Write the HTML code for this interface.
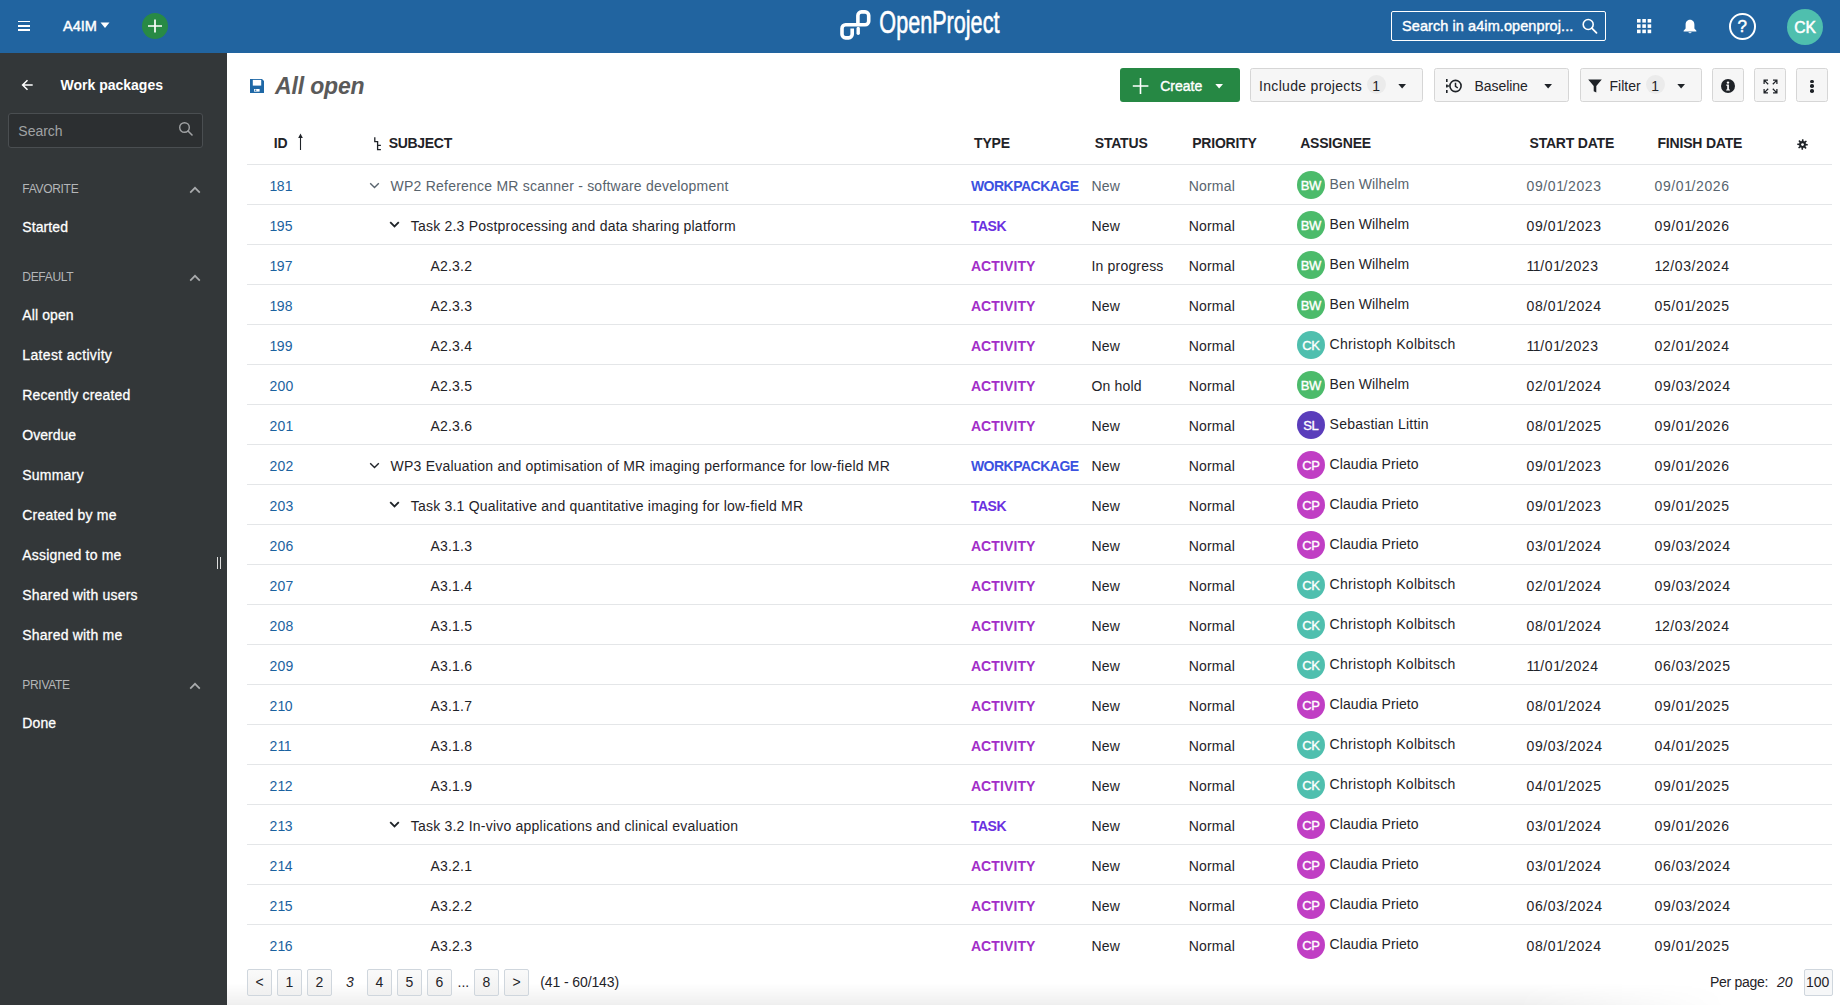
<!DOCTYPE html><html><head><meta charset="utf-8"><style>
*{margin:0;padding:0;box-sizing:border-box}
html,body{width:1840px;height:1005px;overflow:hidden;background:#fff;font-family:"Liberation Sans", sans-serif}
.t{position:absolute;white-space:nowrap;line-height:1}
.a{position:absolute}
</style></head><body><div class="a" style="left:0;top:0;width:1840px;height:53px;background:#2164a0"></div>
<div class="a" style="left:18px;top:20.8px;width:12px;height:1.6px;background:#fff"></div>
<div class="a" style="left:18px;top:25px;width:12px;height:1.6px;background:#fff"></div>
<div class="a" style="left:18px;top:29.2px;width:12px;height:1.6px;background:#fff"></div>
<div class="t" style="left:63px;top:18.73px;font-size:14.5px;font-weight:400;color:#fff;font-style:normal;letter-spacing:0px;-webkit-text-stroke:0.45px #fff;">A4IM</div>
<svg class="a" style="left:100px;top:22px" width="10" height="7"><path d="M0.5 0.5 L9.5 0.5 L5 6 Z" fill="#fff"/></svg>
<div class="a" style="left:142px;top:13px;width:26px;height:26px;border-radius:50%;background:#288a45"></div>
<svg class="a" style="left:147px;top:18px" width="16" height="16"><path d="M8 1.5V14.5M1 8H15" stroke="#fff" stroke-width="1.7"/></svg>
<svg class="a" style="left:835px;top:5px" width="40" height="40" viewBox="0 0 40 40">
<path d="M17.2 23.5 V29.3 A3.6 3.6 0 0 1 13.6 32.9 H10.6 A3.6 3.6 0 0 1 7 29.3 V23.4 A3.6 3.6 0 0 1 10.6 19.8 H30.1 A3.6 3.6 0 0 0 33.7 16.2 V10.5 A3.6 3.6 0 0 0 30.1 6.9 H26.5 A3.6 3.6 0 0 0 22.9 10.5 V19.8" fill="none" stroke="#fff" stroke-width="3.6"/>
<path d="M23.2 23.5 V28.3" stroke="#fff" stroke-width="3.4" stroke-linecap="round"/>
</svg>
<svg class="a" style="left:878px;top:4px" width="130" height="42"><text x="2" y="29.3" font-family="Liberation Sans" font-size="31.5" fill="#fff" stroke="#fff" stroke-width="0.6" transform="scale(0.686 1)" style="font-weight:400">OpenProject</text></svg>
<div class="a" style="left:1391px;top:11px;width:215px;height:30px;border:1.2px solid #fff;border-radius:2px"></div>
<div class="t" style="left:1402px;top:18.73px;font-size:14.5px;font-weight:400;color:#fff;font-style:normal;letter-spacing:0.08px;-webkit-text-stroke:0.4px #fff;">Search in a4im.openproj...</div>
<svg class="a" style="left:1581px;top:17px" width="18" height="18"><circle cx="7.2" cy="7.5" r="5" fill="none" stroke="#fff" stroke-width="1.6"/><path d="M10.8 11.2 L15.5 15.8" stroke="#fff" stroke-width="1.8" stroke-linecap="round"/></svg>
<svg class="a" style="left:1636.7px;top:18.5px" width="15" height="15"><rect x="0.0" y="0.0" width="3.6" height="3.6" fill="#fff"/><rect x="5.3" y="0.0" width="3.6" height="3.6" fill="#fff"/><rect x="10.6" y="0.0" width="3.6" height="3.6" fill="#fff"/><rect x="0.0" y="5.3" width="3.6" height="3.6" fill="#fff"/><rect x="5.3" y="5.3" width="3.6" height="3.6" fill="#fff"/><rect x="10.6" y="5.3" width="3.6" height="3.6" fill="#fff"/><rect x="0.0" y="10.6" width="3.6" height="3.6" fill="#fff"/><rect x="5.3" y="10.6" width="3.6" height="3.6" fill="#fff"/><rect x="10.6" y="10.6" width="3.6" height="3.6" fill="#fff"/></svg>
<svg class="a" style="left:1683px;top:19px" width="14" height="15" viewBox="0 0 14 15"><path d="M7 0.8 C4 0.8 2.6 3.2 2.6 5.8 V9.6 L0.6 11.8 V12.4 H13.4 V11.8 L11.4 9.6 V5.8 C11.4 3.2 10 0.8 7 0.8Z" fill="#fff"/><path d="M5.3 13.2 A1.8 1.6 0 0 0 8.7 13.2Z" fill="#fff"/></svg>
<div class="a" style="left:1729px;top:13px;width:26.5px;height:26.5px;border-radius:50%;border:2px solid #fff"></div>
<div class="t" style="left:1729px;top:18.21px;font-size:17px;font-weight:400;color:#fff;font-style:normal;letter-spacing:0px;-webkit-text-stroke:0.5px #fff;width:26.5px;text-align:center">?</div>
<div class="a" style="left:1787px;top:9px;width:36px;height:36px;border-radius:50%;background:#4fbfae"></div>
<div class="t" style="left:1787px;top:19.79px;font-size:15.6px;font-weight:400;color:#fff;font-style:normal;letter-spacing:-0.2px;-webkit-text-stroke:0.5px #fff;width:36px;text-align:center">CK</div>
<div class="a" style="left:0;top:53px;width:227px;height:952px;background:#333739"></div>
<svg class="a" style="left:21px;top:79px" width="14" height="12"><path d="M11.7 6 H2 M6.5 1.2 L1.6 6 L6.5 10.8" fill="none" stroke="#fff" stroke-width="1.5"/></svg>
<div class="t" style="left:60.5px;top:78.35px;font-size:14px;font-weight:700;color:#fff;font-style:normal;letter-spacing:0px;">Work packages</div>
<div class="a" style="left:7.5px;top:113px;width:195.5px;height:35px;border:1px solid #4a4e51;border-radius:3px;background:#2c2f31"></div>
<div class="t" style="left:18.3px;top:124.15px;font-size:14px;font-weight:400;color:#a0a2a4;font-style:normal;letter-spacing:0px;">Search</div>
<svg class="a" style="left:178px;top:121px" width="16" height="16"><circle cx="6.5" cy="6.5" r="4.8" fill="none" stroke="#a0a2a4" stroke-width="1.4"/><path d="M10 10 L14 14" stroke="#a0a2a4" stroke-width="1.6" stroke-linecap="round"/></svg>
<div class="t" style="left:22.3px;top:182.84px;font-size:12px;font-weight:400;color:#b4b6b8;font-style:normal;letter-spacing:-0.3px;">FAVORITE</div>
<svg class="a" style="left:188.6px;top:185.5px" width="12" height="8"><path d="M1.2 6.6 L6 1.8 L10.8 6.6" fill="none" stroke="#a9abad" stroke-width="1.7"/></svg>
<div class="t" style="left:22.3px;top:270.84px;font-size:12px;font-weight:400;color:#b4b6b8;font-style:normal;letter-spacing:-0.3px;">DEFAULT</div>
<svg class="a" style="left:188.6px;top:273.5px" width="12" height="8"><path d="M1.2 6.6 L6 1.8 L10.8 6.6" fill="none" stroke="#a9abad" stroke-width="1.7"/></svg>
<div class="t" style="left:22.3px;top:678.84px;font-size:12px;font-weight:400;color:#b4b6b8;font-style:normal;letter-spacing:-0.3px;">PRIVATE</div>
<svg class="a" style="left:188.6px;top:681.5px" width="12" height="8"><path d="M1.2 6.6 L6 1.8 L10.8 6.6" fill="none" stroke="#a9abad" stroke-width="1.7"/></svg>
<div class="t" style="left:22.3px;top:219.95px;font-size:14px;font-weight:400;color:#fff;font-style:normal;letter-spacing:0.1px;-webkit-text-stroke:0.28px #fff;">Started</div>
<div class="t" style="left:22.3px;top:307.95px;font-size:14px;font-weight:400;color:#fff;font-style:normal;letter-spacing:0.1px;-webkit-text-stroke:0.28px #fff;">All open</div>
<div class="t" style="left:22.3px;top:347.95px;font-size:14px;font-weight:400;color:#fff;font-style:normal;letter-spacing:0.34px;-webkit-text-stroke:0.28px #fff;">Latest activity</div>
<div class="t" style="left:22.3px;top:387.95px;font-size:14px;font-weight:400;color:#fff;font-style:normal;letter-spacing:0.2px;-webkit-text-stroke:0.28px #fff;">Recently created</div>
<div class="t" style="left:22.3px;top:427.95px;font-size:14px;font-weight:400;color:#fff;font-style:normal;letter-spacing:0.0px;-webkit-text-stroke:0.28px #fff;">Overdue</div>
<div class="t" style="left:22.3px;top:467.95px;font-size:14px;font-weight:400;color:#fff;font-style:normal;letter-spacing:0.2px;-webkit-text-stroke:0.28px #fff;">Summary</div>
<div class="t" style="left:22.3px;top:507.95px;font-size:14px;font-weight:400;color:#fff;font-style:normal;letter-spacing:0.2px;-webkit-text-stroke:0.28px #fff;">Created by me</div>
<div class="t" style="left:22.3px;top:547.95px;font-size:14px;font-weight:400;color:#fff;font-style:normal;letter-spacing:0.2px;-webkit-text-stroke:0.28px #fff;">Assigned to me</div>
<div class="t" style="left:22.3px;top:587.95px;font-size:14px;font-weight:400;color:#fff;font-style:normal;letter-spacing:0.2px;-webkit-text-stroke:0.28px #fff;">Shared with users</div>
<div class="t" style="left:22.3px;top:627.95px;font-size:14px;font-weight:400;color:#fff;font-style:normal;letter-spacing:0.2px;-webkit-text-stroke:0.28px #fff;">Shared with me</div>
<div class="t" style="left:22.3px;top:715.95px;font-size:14px;font-weight:400;color:#fff;font-style:normal;letter-spacing:0.1px;-webkit-text-stroke:0.28px #fff;">Done</div>
<div class="a" style="left:217px;top:557px;width:1.3px;height:12px;background:#ddd"></div><div class="a" style="left:220px;top:557px;width:1.3px;height:12px;background:#ddd"></div>
<svg class="a" style="left:250px;top:79px" width="14" height="14" viewBox="0 0 14 14"><path d="M0 0 H12 L14 2 V14 H0 Z" fill="#1f68a6"/><rect x="2.8" y="0.9" width="8.4" height="5.7" fill="#fff"/><rect x="4" y="10" width="5.6" height="2.6" fill="#fff"/><rect x="4.8" y="10.6" width="1.5" height="1.2" fill="#1f68a6"/></svg>
<div class="t" style="left:275px;top:75.33px;font-size:23px;font-weight:700;color:#5a5a5a;font-style:italic;letter-spacing:-0.15px;">All open</div>
<div class="a" style="left:1120px;top:68px;width:120px;height:34px;background:#268844;border-radius:3px"></div>
<svg class="a" style="left:1132px;top:78px" width="17" height="16"><path d="M8.5 0 V16 M0.8 8 H16.4" stroke="#fff" stroke-width="1.6"/></svg>
<div class="t" style="left:1160.2px;top:79.05px;font-size:14px;font-weight:400;color:#fff;font-style:normal;letter-spacing:0px;-webkit-text-stroke:0.4px #fff;">Create</div>
<svg class="a" style="left:1214.5px;top:84px" width="9" height="5"><path d="M0.3 0 H8 L4.15 4.4Z" fill="#fff"/></svg>
<div class="a" style="left:1250px;top:68px;width:172.5px;height:34px;background:#f6f6f6;border:1px solid #d6d6d6;border-radius:2.5px"></div>
<div class="t" style="left:1259px;top:78.65px;font-size:14px;font-weight:400;color:#1f2328;font-style:normal;letter-spacing:0.32px;">Include projects</div>
<div class="a" style="left:1366.5px;top:74.5px;width:19px;height:19px;border-radius:50%;background:#ebebeb"></div>
<div class="t" style="left:1372.3px;top:78.65px;font-size:14px;font-weight:400;color:#1f2328;font-style:normal;letter-spacing:0px;">1</div>
<svg class="a" style="left:1397.5px;top:84px" width="9" height="5"><path d="M0.3 0 H8 L4.15 4.4Z" fill="#1f2328"/></svg>
<div class="a" style="left:1433.5px;top:68px;width:135px;height:34px;background:#f6f6f6;border:1px solid #d6d6d6;border-radius:2.5px"></div>
<svg class="a" style="left:1445px;top:78px" width="18" height="16" viewBox="0 0 18 16"><path d="M1.8 1 V4 M1.8 6.5 V9.5 M1.8 12 V15" stroke="#1f2328" stroke-width="1.6"/><path d="M1.8 8 H4" stroke="#1f2328" stroke-width="1.4"/><circle cx="10.5" cy="8" r="5.6" fill="none" stroke="#1f2328" stroke-width="1.6"/><path d="M10.5 4.8 V8.3 L12.8 10" fill="none" stroke="#1f2328" stroke-width="1.5"/></svg>
<div class="t" style="left:1474.5px;top:78.65px;font-size:14px;font-weight:400;color:#1f2328;font-style:normal;letter-spacing:-0.05px;">Baseline</div>
<svg class="a" style="left:1543.5px;top:84px" width="9" height="5"><path d="M0.3 0 H8 L4.15 4.4Z" fill="#1f2328"/></svg>
<div class="a" style="left:1579.5px;top:68px;width:122.5px;height:34px;background:#f6f6f6;border:1px solid #d6d6d6;border-radius:2.5px"></div>
<svg class="a" style="left:1588px;top:79px" width="14" height="14" viewBox="0 0 14 14"><path d="M0.2 0.5 H13.8 L8.3 7 V13.5 L5.7 12.2 V7 Z" fill="#1f2328"/></svg>
<div class="t" style="left:1609.5px;top:78.65px;font-size:14px;font-weight:400;color:#1f2328;font-style:normal;letter-spacing:0px;">Filter</div>
<div class="a" style="left:1645.5px;top:74.5px;width:19px;height:19px;border-radius:50%;background:#ebebeb"></div>
<div class="t" style="left:1651.3px;top:78.65px;font-size:14px;font-weight:400;color:#1f2328;font-style:normal;letter-spacing:0px;">1</div>
<svg class="a" style="left:1676.5px;top:84px" width="9" height="5"><path d="M0.3 0 H8 L4.15 4.4Z" fill="#1f2328"/></svg>
<div class="a" style="left:1712px;top:68px;width:31.5px;height:34px;background:#f6f6f6;border:1px solid #d6d6d6;border-radius:2.5px"></div>
<svg class="a" style="left:1721px;top:78.7px" width="14" height="14" viewBox="0 0 14 14"><circle cx="7" cy="7" r="7" fill="#1f2328"/><circle cx="7" cy="3.6" r="1.2" fill="#fff"/><path d="M5.3 5.6 H7.9 V10.4 H8.9 V11.6 H5.2 V10.4 H6.2 V6.8 H5.3 Z" fill="#fff"/></svg>
<div class="a" style="left:1754px;top:68px;width:31.5px;height:34px;background:#f6f6f6;border:1px solid #d6d6d6;border-radius:2.5px"></div>
<svg class="a" style="left:1762.5px;top:78.5px" width="15" height="15" viewBox="0 0 15 15" fill="none" stroke="#1f2328" stroke-width="1.25"><path d="M1.1 5 V1.1 H5 M1.1 1.1 L5.2 5.2"/><path d="M10 1.1 H13.9 V5 M13.9 1.1 L9.8 5.2"/><path d="M1.1 10 V13.9 H5 M1.1 13.9 L5.2 9.8"/><path d="M13.9 10 V13.9 H10 M13.9 13.9 L9.8 9.8"/></svg>
<div class="a" style="left:1796px;top:68px;width:31.5px;height:34px;background:#f6f6f6;border:1px solid #d6d6d6;border-radius:2.5px"></div>
<div class="a" style="left:1810.4px;top:79.60000000000001px;width:3.6px;height:3.6px;border-radius:50%;background:#1f2328"></div>
<div class="a" style="left:1810.4px;top:84.3px;width:3.6px;height:3.6px;border-radius:50%;background:#1f2328"></div>
<div class="a" style="left:1810.4px;top:89.0px;width:3.6px;height:3.6px;border-radius:50%;background:#1f2328"></div>
<div class="t" style="left:273.7px;top:136.15px;font-size:14px;font-weight:700;color:#1f2328;font-style:normal;letter-spacing:-0.2px;">ID</div>
<svg class="a" style="left:297px;top:133px" width="8" height="18"><path d="M3.5 17 V4" stroke="#1f2328" stroke-width="1.1"/><path d="M1.2 5 L3.5 0.4 L5.8 5Z" fill="#1f2328"/></svg>
<svg class="a" style="left:372px;top:137px" width="10" height="14"><path d="M2.8 0.2 V4.6 H5.6 V12.7 H8.9 M5.6 8.4 H8.9" fill="none" stroke="#1f2328" stroke-width="1.3"/></svg>
<div class="t" style="left:388.7px;top:136.15px;font-size:14px;font-weight:700;color:#1f2328;font-style:normal;letter-spacing:-0.3px;">SUBJECT</div>
<div class="t" style="left:974.1px;top:136.15px;font-size:14px;font-weight:700;color:#1f2328;font-style:normal;letter-spacing:-0.2px;">TYPE</div>
<div class="t" style="left:1094.8px;top:136.15px;font-size:14px;font-weight:700;color:#1f2328;font-style:normal;letter-spacing:-0.2px;">STATUS</div>
<div class="t" style="left:1192.2px;top:136.15px;font-size:14px;font-weight:700;color:#1f2328;font-style:normal;letter-spacing:-0.2px;">PRIORITY</div>
<div class="t" style="left:1300.2px;top:136.15px;font-size:14px;font-weight:700;color:#1f2328;font-style:normal;letter-spacing:-0.2px;">ASSIGNEE</div>
<div class="t" style="left:1529.5px;top:136.15px;font-size:14px;font-weight:700;color:#1f2328;font-style:normal;letter-spacing:-0.2px;">START DATE</div>
<div class="t" style="left:1657.5px;top:136.15px;font-size:14px;font-weight:700;color:#1f2328;font-style:normal;letter-spacing:-0.2px;">FINISH DATE</div>
<svg class="a" style="left:1797.3px;top:138.7px" width="11" height="11" viewBox="0 0 12 12"><g fill="#1f2328" transform="rotate(3 6 6)"><circle cx="6" cy="6" r="3.7"/><rect x="5.1" y="0.2" width="1.8" height="3" rx="0.5" transform="rotate(0 6 6)"/><rect x="5.1" y="0.2" width="1.8" height="3" rx="0.5" transform="rotate(45 6 6)"/><rect x="5.1" y="0.2" width="1.8" height="3" rx="0.5" transform="rotate(90 6 6)"/><rect x="5.1" y="0.2" width="1.8" height="3" rx="0.5" transform="rotate(135 6 6)"/><rect x="5.1" y="0.2" width="1.8" height="3" rx="0.5" transform="rotate(180 6 6)"/><rect x="5.1" y="0.2" width="1.8" height="3" rx="0.5" transform="rotate(225 6 6)"/><rect x="5.1" y="0.2" width="1.8" height="3" rx="0.5" transform="rotate(270 6 6)"/><rect x="5.1" y="0.2" width="1.8" height="3" rx="0.5" transform="rotate(315 6 6)"/></g><circle cx="6" cy="6" r="1.5" fill="#fff"/></svg>
<div class="a" style="left:247px;top:164px;width:1585px;height:1px;background:#e4e6e8"></div>
<div class="t" style="left:269.5px;top:179.15px;font-size:14px;font-weight:400;color:#1b62a0;font-style:normal;letter-spacing:0.2px;"><span style="letter-spacing:-0.6px">1</span>8<span style="letter-spacing:-0.6px">1</span></div>
<svg class="a" style="left:368.7px;top:181.5px" width="12" height="8"><path d="M1.2 1.2 L5.5 5.5 L9.8 1.2" fill="none" stroke="#58636d" stroke-width="1.4"/></svg>
<div class="t" style="left:390.6px;top:179.15px;font-size:14px;font-weight:400;color:#58636d;font-style:normal;letter-spacing:0.22px;">WP2 Reference MR scanner - software development</div>
<div class="t" style="left:970.9px;top:179.15px;font-size:14px;font-weight:700;color:#3b52e0;font-style:normal;letter-spacing:-0.5px;">WORKPACKAGE</div>
<div class="t" style="left:1091.5px;top:179.15px;font-size:14px;font-weight:400;color:#58636d;font-style:normal;letter-spacing:0.18px;">New</div>
<div class="t" style="left:1188.7px;top:179.15px;font-size:14px;font-weight:400;color:#58636d;font-style:normal;letter-spacing:0.2px;">Normal</div>
<div class="a" style="left:1297px;top:171px;width:28px;height:28px;border-radius:50%;background:#4cbb6b"></div>
<div class="t" style="left:1297px;top:178.80px;font-size:13px;font-weight:400;color:#fff;font-style:normal;letter-spacing:-0.4px;-webkit-text-stroke:0.35px #fff;width:28px;text-align:center;text-indent:-0.4px">BW</div>
<div class="t" style="left:1329.6px;top:177.15px;font-size:14px;font-weight:400;color:#58636d;font-style:normal;letter-spacing:0.1px;">Ben Wilhelm</div>
<div class="t" style="left:1526.5px;top:179.15px;font-size:14px;font-weight:400;color:#58636d;font-style:normal;letter-spacing:0.6px;">09/0<span style="letter-spacing:-0.4px">1</span>/2023</div>
<div class="t" style="left:1654.5px;top:179.15px;font-size:14px;font-weight:400;color:#58636d;font-style:normal;letter-spacing:0.6px;">09/0<span style="letter-spacing:-0.4px">1</span>/2026</div>
<div class="a" style="left:247px;top:204px;width:1585px;height:1px;background:#e4e6e8"></div>
<div class="t" style="left:269.5px;top:219.15px;font-size:14px;font-weight:400;color:#1b62a0;font-style:normal;letter-spacing:0.2px;"><span style="letter-spacing:-0.6px">1</span>95</div>
<svg class="a" style="left:388.6px;top:221.3px" width="12" height="8"><path d="M1.2 1.2 L5.5 5.5 L9.8 1.2" fill="none" stroke="#1f2328" stroke-width="1.8"/></svg>
<div class="t" style="left:410.7px;top:219.15px;font-size:14px;font-weight:400;color:#1f2328;font-style:normal;letter-spacing:0.22px;">Task 2.3 Postprocessing and data sharing platform</div>
<div class="t" style="left:970.9px;top:219.15px;font-size:14px;font-weight:700;color:#6a30e0;font-style:normal;letter-spacing:-0.45px;">TASK</div>
<div class="t" style="left:1091.5px;top:219.15px;font-size:14px;font-weight:400;color:#1f2328;font-style:normal;letter-spacing:0.18px;">New</div>
<div class="t" style="left:1188.7px;top:219.15px;font-size:14px;font-weight:400;color:#1f2328;font-style:normal;letter-spacing:0.2px;">Normal</div>
<div class="a" style="left:1297px;top:211px;width:28px;height:28px;border-radius:50%;background:#4cbb6b"></div>
<div class="t" style="left:1297px;top:218.80px;font-size:13px;font-weight:400;color:#fff;font-style:normal;letter-spacing:-0.4px;-webkit-text-stroke:0.35px #fff;width:28px;text-align:center;text-indent:-0.4px">BW</div>
<div class="t" style="left:1329.6px;top:217.15px;font-size:14px;font-weight:400;color:#1f2328;font-style:normal;letter-spacing:0.1px;">Ben Wilhelm</div>
<div class="t" style="left:1526.5px;top:219.15px;font-size:14px;font-weight:400;color:#1f2328;font-style:normal;letter-spacing:0.6px;">09/0<span style="letter-spacing:-0.4px">1</span>/2023</div>
<div class="t" style="left:1654.5px;top:219.15px;font-size:14px;font-weight:400;color:#1f2328;font-style:normal;letter-spacing:0.6px;">09/0<span style="letter-spacing:-0.4px">1</span>/2026</div>
<div class="a" style="left:247px;top:244px;width:1585px;height:1px;background:#e4e6e8"></div>
<div class="t" style="left:269.5px;top:259.15px;font-size:14px;font-weight:400;color:#1b62a0;font-style:normal;letter-spacing:0.2px;"><span style="letter-spacing:-0.6px">1</span>97</div>
<div class="t" style="left:430.5px;top:259.15px;font-size:14px;font-weight:400;color:#1f2328;font-style:normal;letter-spacing:0.2px;">A2.3.2</div>
<div class="t" style="left:970.9px;top:259.15px;font-size:14px;font-weight:700;color:#a22ec8;font-style:normal;letter-spacing:0.1px;">ACTIVITY</div>
<div class="t" style="left:1091.5px;top:259.15px;font-size:14px;font-weight:400;color:#1f2328;font-style:normal;letter-spacing:0.18px;">In progress</div>
<div class="t" style="left:1188.7px;top:259.15px;font-size:14px;font-weight:400;color:#1f2328;font-style:normal;letter-spacing:0.2px;">Normal</div>
<div class="a" style="left:1297px;top:251px;width:28px;height:28px;border-radius:50%;background:#4cbb6b"></div>
<div class="t" style="left:1297px;top:258.80px;font-size:13px;font-weight:400;color:#fff;font-style:normal;letter-spacing:-0.4px;-webkit-text-stroke:0.35px #fff;width:28px;text-align:center;text-indent:-0.4px">BW</div>
<div class="t" style="left:1329.6px;top:257.15px;font-size:14px;font-weight:400;color:#1f2328;font-style:normal;letter-spacing:0.1px;">Ben Wilhelm</div>
<div class="t" style="left:1526.5px;top:259.15px;font-size:14px;font-weight:400;color:#1f2328;font-style:normal;letter-spacing:0.6px;"><span style="letter-spacing:-0.4px">1</span><span style="letter-spacing:-0.4px">1</span>/0<span style="letter-spacing:-0.4px">1</span>/2023</div>
<div class="t" style="left:1654.5px;top:259.15px;font-size:14px;font-weight:400;color:#1f2328;font-style:normal;letter-spacing:0.6px;"><span style="letter-spacing:-0.4px">1</span>2/03/2024</div>
<div class="a" style="left:247px;top:284px;width:1585px;height:1px;background:#e4e6e8"></div>
<div class="t" style="left:269.5px;top:299.15px;font-size:14px;font-weight:400;color:#1b62a0;font-style:normal;letter-spacing:0.2px;"><span style="letter-spacing:-0.6px">1</span>98</div>
<div class="t" style="left:430.5px;top:299.15px;font-size:14px;font-weight:400;color:#1f2328;font-style:normal;letter-spacing:0.2px;">A2.3.3</div>
<div class="t" style="left:970.9px;top:299.15px;font-size:14px;font-weight:700;color:#a22ec8;font-style:normal;letter-spacing:0.1px;">ACTIVITY</div>
<div class="t" style="left:1091.5px;top:299.15px;font-size:14px;font-weight:400;color:#1f2328;font-style:normal;letter-spacing:0.18px;">New</div>
<div class="t" style="left:1188.7px;top:299.15px;font-size:14px;font-weight:400;color:#1f2328;font-style:normal;letter-spacing:0.2px;">Normal</div>
<div class="a" style="left:1297px;top:291px;width:28px;height:28px;border-radius:50%;background:#4cbb6b"></div>
<div class="t" style="left:1297px;top:298.80px;font-size:13px;font-weight:400;color:#fff;font-style:normal;letter-spacing:-0.4px;-webkit-text-stroke:0.35px #fff;width:28px;text-align:center;text-indent:-0.4px">BW</div>
<div class="t" style="left:1329.6px;top:297.15px;font-size:14px;font-weight:400;color:#1f2328;font-style:normal;letter-spacing:0.1px;">Ben Wilhelm</div>
<div class="t" style="left:1526.5px;top:299.15px;font-size:14px;font-weight:400;color:#1f2328;font-style:normal;letter-spacing:0.6px;">08/0<span style="letter-spacing:-0.4px">1</span>/2024</div>
<div class="t" style="left:1654.5px;top:299.15px;font-size:14px;font-weight:400;color:#1f2328;font-style:normal;letter-spacing:0.6px;">05/0<span style="letter-spacing:-0.4px">1</span>/2025</div>
<div class="a" style="left:247px;top:324px;width:1585px;height:1px;background:#e4e6e8"></div>
<div class="t" style="left:269.5px;top:339.15px;font-size:14px;font-weight:400;color:#1b62a0;font-style:normal;letter-spacing:0.2px;"><span style="letter-spacing:-0.6px">1</span>99</div>
<div class="t" style="left:430.5px;top:339.15px;font-size:14px;font-weight:400;color:#1f2328;font-style:normal;letter-spacing:0.2px;">A2.3.4</div>
<div class="t" style="left:970.9px;top:339.15px;font-size:14px;font-weight:700;color:#a22ec8;font-style:normal;letter-spacing:0.1px;">ACTIVITY</div>
<div class="t" style="left:1091.5px;top:339.15px;font-size:14px;font-weight:400;color:#1f2328;font-style:normal;letter-spacing:0.18px;">New</div>
<div class="t" style="left:1188.7px;top:339.15px;font-size:14px;font-weight:400;color:#1f2328;font-style:normal;letter-spacing:0.2px;">Normal</div>
<div class="a" style="left:1297px;top:331px;width:28px;height:28px;border-radius:50%;background:#4fbfae"></div>
<div class="t" style="left:1297px;top:338.80px;font-size:13px;font-weight:400;color:#fff;font-style:normal;letter-spacing:-0.4px;-webkit-text-stroke:0.35px #fff;width:28px;text-align:center;text-indent:-0.4px">CK</div>
<div class="t" style="left:1329.6px;top:337.15px;font-size:14px;font-weight:400;color:#1f2328;font-style:normal;letter-spacing:0.28px;">Christoph Kolbitsch</div>
<div class="t" style="left:1526.5px;top:339.15px;font-size:14px;font-weight:400;color:#1f2328;font-style:normal;letter-spacing:0.6px;"><span style="letter-spacing:-0.4px">1</span><span style="letter-spacing:-0.4px">1</span>/0<span style="letter-spacing:-0.4px">1</span>/2023</div>
<div class="t" style="left:1654.5px;top:339.15px;font-size:14px;font-weight:400;color:#1f2328;font-style:normal;letter-spacing:0.6px;">02/0<span style="letter-spacing:-0.4px">1</span>/2024</div>
<div class="a" style="left:247px;top:364px;width:1585px;height:1px;background:#e4e6e8"></div>
<div class="t" style="left:269.5px;top:379.15px;font-size:14px;font-weight:400;color:#1b62a0;font-style:normal;letter-spacing:0.2px;">200</div>
<div class="t" style="left:430.5px;top:379.15px;font-size:14px;font-weight:400;color:#1f2328;font-style:normal;letter-spacing:0.2px;">A2.3.5</div>
<div class="t" style="left:970.9px;top:379.15px;font-size:14px;font-weight:700;color:#a22ec8;font-style:normal;letter-spacing:0.1px;">ACTIVITY</div>
<div class="t" style="left:1091.5px;top:379.15px;font-size:14px;font-weight:400;color:#1f2328;font-style:normal;letter-spacing:0.18px;">On hold</div>
<div class="t" style="left:1188.7px;top:379.15px;font-size:14px;font-weight:400;color:#1f2328;font-style:normal;letter-spacing:0.2px;">Normal</div>
<div class="a" style="left:1297px;top:371px;width:28px;height:28px;border-radius:50%;background:#4cbb6b"></div>
<div class="t" style="left:1297px;top:378.80px;font-size:13px;font-weight:400;color:#fff;font-style:normal;letter-spacing:-0.4px;-webkit-text-stroke:0.35px #fff;width:28px;text-align:center;text-indent:-0.4px">BW</div>
<div class="t" style="left:1329.6px;top:377.15px;font-size:14px;font-weight:400;color:#1f2328;font-style:normal;letter-spacing:0.1px;">Ben Wilhelm</div>
<div class="t" style="left:1526.5px;top:379.15px;font-size:14px;font-weight:400;color:#1f2328;font-style:normal;letter-spacing:0.6px;">02/0<span style="letter-spacing:-0.4px">1</span>/2024</div>
<div class="t" style="left:1654.5px;top:379.15px;font-size:14px;font-weight:400;color:#1f2328;font-style:normal;letter-spacing:0.6px;">09/03/2024</div>
<div class="a" style="left:247px;top:404px;width:1585px;height:1px;background:#e4e6e8"></div>
<div class="t" style="left:269.5px;top:419.15px;font-size:14px;font-weight:400;color:#1b62a0;font-style:normal;letter-spacing:0.2px;">20<span style="letter-spacing:-0.6px">1</span></div>
<div class="t" style="left:430.5px;top:419.15px;font-size:14px;font-weight:400;color:#1f2328;font-style:normal;letter-spacing:0.2px;">A2.3.6</div>
<div class="t" style="left:970.9px;top:419.15px;font-size:14px;font-weight:700;color:#a22ec8;font-style:normal;letter-spacing:0.1px;">ACTIVITY</div>
<div class="t" style="left:1091.5px;top:419.15px;font-size:14px;font-weight:400;color:#1f2328;font-style:normal;letter-spacing:0.18px;">New</div>
<div class="t" style="left:1188.7px;top:419.15px;font-size:14px;font-weight:400;color:#1f2328;font-style:normal;letter-spacing:0.2px;">Normal</div>
<div class="a" style="left:1297px;top:411px;width:28px;height:28px;border-radius:50%;background:#5a3dbb"></div>
<div class="t" style="left:1297px;top:418.80px;font-size:13px;font-weight:400;color:#fff;font-style:normal;letter-spacing:-0.4px;-webkit-text-stroke:0.35px #fff;width:28px;text-align:center;text-indent:-0.4px">SL</div>
<div class="t" style="left:1329.6px;top:417.15px;font-size:14px;font-weight:400;color:#1f2328;font-style:normal;letter-spacing:0.22px;">Sebastian Littin</div>
<div class="t" style="left:1526.5px;top:419.15px;font-size:14px;font-weight:400;color:#1f2328;font-style:normal;letter-spacing:0.6px;">08/0<span style="letter-spacing:-0.4px">1</span>/2025</div>
<div class="t" style="left:1654.5px;top:419.15px;font-size:14px;font-weight:400;color:#1f2328;font-style:normal;letter-spacing:0.6px;">09/0<span style="letter-spacing:-0.4px">1</span>/2026</div>
<div class="a" style="left:247px;top:444px;width:1585px;height:1px;background:#e4e6e8"></div>
<div class="t" style="left:269.5px;top:459.15px;font-size:14px;font-weight:400;color:#1b62a0;font-style:normal;letter-spacing:0.2px;">202</div>
<svg class="a" style="left:368.7px;top:461.5px" width="12" height="8"><path d="M1.2 1.2 L5.5 5.5 L9.8 1.2" fill="none" stroke="#1f2328" stroke-width="1.4"/></svg>
<div class="t" style="left:390.6px;top:459.15px;font-size:14px;font-weight:400;color:#1f2328;font-style:normal;letter-spacing:0.22px;">WP3 Evaluation and optimisation of MR imaging performance for low-field MR</div>
<div class="t" style="left:970.9px;top:459.15px;font-size:14px;font-weight:700;color:#3b52e0;font-style:normal;letter-spacing:-0.5px;">WORKPACKAGE</div>
<div class="t" style="left:1091.5px;top:459.15px;font-size:14px;font-weight:400;color:#1f2328;font-style:normal;letter-spacing:0.18px;">New</div>
<div class="t" style="left:1188.7px;top:459.15px;font-size:14px;font-weight:400;color:#1f2328;font-style:normal;letter-spacing:0.2px;">Normal</div>
<div class="a" style="left:1297px;top:451px;width:28px;height:28px;border-radius:50%;background:#c03ec4"></div>
<div class="t" style="left:1297px;top:458.80px;font-size:13px;font-weight:400;color:#fff;font-style:normal;letter-spacing:-0.4px;-webkit-text-stroke:0.35px #fff;width:28px;text-align:center;text-indent:-0.4px">CP</div>
<div class="t" style="left:1329.6px;top:457.15px;font-size:14px;font-weight:400;color:#1f2328;font-style:normal;letter-spacing:0.08px;">Claudia Prieto</div>
<div class="t" style="left:1526.5px;top:459.15px;font-size:14px;font-weight:400;color:#1f2328;font-style:normal;letter-spacing:0.6px;">09/0<span style="letter-spacing:-0.4px">1</span>/2023</div>
<div class="t" style="left:1654.5px;top:459.15px;font-size:14px;font-weight:400;color:#1f2328;font-style:normal;letter-spacing:0.6px;">09/0<span style="letter-spacing:-0.4px">1</span>/2026</div>
<div class="a" style="left:247px;top:484px;width:1585px;height:1px;background:#e4e6e8"></div>
<div class="t" style="left:269.5px;top:499.15px;font-size:14px;font-weight:400;color:#1b62a0;font-style:normal;letter-spacing:0.2px;">203</div>
<svg class="a" style="left:388.6px;top:501.3px" width="12" height="8"><path d="M1.2 1.2 L5.5 5.5 L9.8 1.2" fill="none" stroke="#1f2328" stroke-width="1.8"/></svg>
<div class="t" style="left:410.7px;top:499.15px;font-size:14px;font-weight:400;color:#1f2328;font-style:normal;letter-spacing:0.22px;">Task 3.1 Qualitative and quantitative imaging for low-field MR</div>
<div class="t" style="left:970.9px;top:499.15px;font-size:14px;font-weight:700;color:#6a30e0;font-style:normal;letter-spacing:-0.45px;">TASK</div>
<div class="t" style="left:1091.5px;top:499.15px;font-size:14px;font-weight:400;color:#1f2328;font-style:normal;letter-spacing:0.18px;">New</div>
<div class="t" style="left:1188.7px;top:499.15px;font-size:14px;font-weight:400;color:#1f2328;font-style:normal;letter-spacing:0.2px;">Normal</div>
<div class="a" style="left:1297px;top:491px;width:28px;height:28px;border-radius:50%;background:#c03ec4"></div>
<div class="t" style="left:1297px;top:498.80px;font-size:13px;font-weight:400;color:#fff;font-style:normal;letter-spacing:-0.4px;-webkit-text-stroke:0.35px #fff;width:28px;text-align:center;text-indent:-0.4px">CP</div>
<div class="t" style="left:1329.6px;top:497.15px;font-size:14px;font-weight:400;color:#1f2328;font-style:normal;letter-spacing:0.08px;">Claudia Prieto</div>
<div class="t" style="left:1526.5px;top:499.15px;font-size:14px;font-weight:400;color:#1f2328;font-style:normal;letter-spacing:0.6px;">09/0<span style="letter-spacing:-0.4px">1</span>/2023</div>
<div class="t" style="left:1654.5px;top:499.15px;font-size:14px;font-weight:400;color:#1f2328;font-style:normal;letter-spacing:0.6px;">09/0<span style="letter-spacing:-0.4px">1</span>/2025</div>
<div class="a" style="left:247px;top:524px;width:1585px;height:1px;background:#e4e6e8"></div>
<div class="t" style="left:269.5px;top:539.15px;font-size:14px;font-weight:400;color:#1b62a0;font-style:normal;letter-spacing:0.2px;">206</div>
<div class="t" style="left:430.5px;top:539.15px;font-size:14px;font-weight:400;color:#1f2328;font-style:normal;letter-spacing:0.2px;">A3.1.3</div>
<div class="t" style="left:970.9px;top:539.15px;font-size:14px;font-weight:700;color:#a22ec8;font-style:normal;letter-spacing:0.1px;">ACTIVITY</div>
<div class="t" style="left:1091.5px;top:539.15px;font-size:14px;font-weight:400;color:#1f2328;font-style:normal;letter-spacing:0.18px;">New</div>
<div class="t" style="left:1188.7px;top:539.15px;font-size:14px;font-weight:400;color:#1f2328;font-style:normal;letter-spacing:0.2px;">Normal</div>
<div class="a" style="left:1297px;top:531px;width:28px;height:28px;border-radius:50%;background:#c03ec4"></div>
<div class="t" style="left:1297px;top:538.80px;font-size:13px;font-weight:400;color:#fff;font-style:normal;letter-spacing:-0.4px;-webkit-text-stroke:0.35px #fff;width:28px;text-align:center;text-indent:-0.4px">CP</div>
<div class="t" style="left:1329.6px;top:537.15px;font-size:14px;font-weight:400;color:#1f2328;font-style:normal;letter-spacing:0.08px;">Claudia Prieto</div>
<div class="t" style="left:1526.5px;top:539.15px;font-size:14px;font-weight:400;color:#1f2328;font-style:normal;letter-spacing:0.6px;">03/0<span style="letter-spacing:-0.4px">1</span>/2024</div>
<div class="t" style="left:1654.5px;top:539.15px;font-size:14px;font-weight:400;color:#1f2328;font-style:normal;letter-spacing:0.6px;">09/03/2024</div>
<div class="a" style="left:247px;top:564px;width:1585px;height:1px;background:#e4e6e8"></div>
<div class="t" style="left:269.5px;top:579.15px;font-size:14px;font-weight:400;color:#1b62a0;font-style:normal;letter-spacing:0.2px;">207</div>
<div class="t" style="left:430.5px;top:579.15px;font-size:14px;font-weight:400;color:#1f2328;font-style:normal;letter-spacing:0.2px;">A3.1.4</div>
<div class="t" style="left:970.9px;top:579.15px;font-size:14px;font-weight:700;color:#a22ec8;font-style:normal;letter-spacing:0.1px;">ACTIVITY</div>
<div class="t" style="left:1091.5px;top:579.15px;font-size:14px;font-weight:400;color:#1f2328;font-style:normal;letter-spacing:0.18px;">New</div>
<div class="t" style="left:1188.7px;top:579.15px;font-size:14px;font-weight:400;color:#1f2328;font-style:normal;letter-spacing:0.2px;">Normal</div>
<div class="a" style="left:1297px;top:571px;width:28px;height:28px;border-radius:50%;background:#4fbfae"></div>
<div class="t" style="left:1297px;top:578.80px;font-size:13px;font-weight:400;color:#fff;font-style:normal;letter-spacing:-0.4px;-webkit-text-stroke:0.35px #fff;width:28px;text-align:center;text-indent:-0.4px">CK</div>
<div class="t" style="left:1329.6px;top:577.15px;font-size:14px;font-weight:400;color:#1f2328;font-style:normal;letter-spacing:0.28px;">Christoph Kolbitsch</div>
<div class="t" style="left:1526.5px;top:579.15px;font-size:14px;font-weight:400;color:#1f2328;font-style:normal;letter-spacing:0.6px;">02/0<span style="letter-spacing:-0.4px">1</span>/2024</div>
<div class="t" style="left:1654.5px;top:579.15px;font-size:14px;font-weight:400;color:#1f2328;font-style:normal;letter-spacing:0.6px;">09/03/2024</div>
<div class="a" style="left:247px;top:604px;width:1585px;height:1px;background:#e4e6e8"></div>
<div class="t" style="left:269.5px;top:619.15px;font-size:14px;font-weight:400;color:#1b62a0;font-style:normal;letter-spacing:0.2px;">208</div>
<div class="t" style="left:430.5px;top:619.15px;font-size:14px;font-weight:400;color:#1f2328;font-style:normal;letter-spacing:0.2px;">A3.1.5</div>
<div class="t" style="left:970.9px;top:619.15px;font-size:14px;font-weight:700;color:#a22ec8;font-style:normal;letter-spacing:0.1px;">ACTIVITY</div>
<div class="t" style="left:1091.5px;top:619.15px;font-size:14px;font-weight:400;color:#1f2328;font-style:normal;letter-spacing:0.18px;">New</div>
<div class="t" style="left:1188.7px;top:619.15px;font-size:14px;font-weight:400;color:#1f2328;font-style:normal;letter-spacing:0.2px;">Normal</div>
<div class="a" style="left:1297px;top:611px;width:28px;height:28px;border-radius:50%;background:#4fbfae"></div>
<div class="t" style="left:1297px;top:618.80px;font-size:13px;font-weight:400;color:#fff;font-style:normal;letter-spacing:-0.4px;-webkit-text-stroke:0.35px #fff;width:28px;text-align:center;text-indent:-0.4px">CK</div>
<div class="t" style="left:1329.6px;top:617.15px;font-size:14px;font-weight:400;color:#1f2328;font-style:normal;letter-spacing:0.28px;">Christoph Kolbitsch</div>
<div class="t" style="left:1526.5px;top:619.15px;font-size:14px;font-weight:400;color:#1f2328;font-style:normal;letter-spacing:0.6px;">08/0<span style="letter-spacing:-0.4px">1</span>/2024</div>
<div class="t" style="left:1654.5px;top:619.15px;font-size:14px;font-weight:400;color:#1f2328;font-style:normal;letter-spacing:0.6px;"><span style="letter-spacing:-0.4px">1</span>2/03/2024</div>
<div class="a" style="left:247px;top:644px;width:1585px;height:1px;background:#e4e6e8"></div>
<div class="t" style="left:269.5px;top:659.15px;font-size:14px;font-weight:400;color:#1b62a0;font-style:normal;letter-spacing:0.2px;">209</div>
<div class="t" style="left:430.5px;top:659.15px;font-size:14px;font-weight:400;color:#1f2328;font-style:normal;letter-spacing:0.2px;">A3.1.6</div>
<div class="t" style="left:970.9px;top:659.15px;font-size:14px;font-weight:700;color:#a22ec8;font-style:normal;letter-spacing:0.1px;">ACTIVITY</div>
<div class="t" style="left:1091.5px;top:659.15px;font-size:14px;font-weight:400;color:#1f2328;font-style:normal;letter-spacing:0.18px;">New</div>
<div class="t" style="left:1188.7px;top:659.15px;font-size:14px;font-weight:400;color:#1f2328;font-style:normal;letter-spacing:0.2px;">Normal</div>
<div class="a" style="left:1297px;top:651px;width:28px;height:28px;border-radius:50%;background:#4fbfae"></div>
<div class="t" style="left:1297px;top:658.80px;font-size:13px;font-weight:400;color:#fff;font-style:normal;letter-spacing:-0.4px;-webkit-text-stroke:0.35px #fff;width:28px;text-align:center;text-indent:-0.4px">CK</div>
<div class="t" style="left:1329.6px;top:657.15px;font-size:14px;font-weight:400;color:#1f2328;font-style:normal;letter-spacing:0.28px;">Christoph Kolbitsch</div>
<div class="t" style="left:1526.5px;top:659.15px;font-size:14px;font-weight:400;color:#1f2328;font-style:normal;letter-spacing:0.6px;"><span style="letter-spacing:-0.4px">1</span><span style="letter-spacing:-0.4px">1</span>/0<span style="letter-spacing:-0.4px">1</span>/2024</div>
<div class="t" style="left:1654.5px;top:659.15px;font-size:14px;font-weight:400;color:#1f2328;font-style:normal;letter-spacing:0.6px;">06/03/2025</div>
<div class="a" style="left:247px;top:684px;width:1585px;height:1px;background:#e4e6e8"></div>
<div class="t" style="left:269.5px;top:699.15px;font-size:14px;font-weight:400;color:#1b62a0;font-style:normal;letter-spacing:0.2px;">2<span style="letter-spacing:-0.6px">1</span>0</div>
<div class="t" style="left:430.5px;top:699.15px;font-size:14px;font-weight:400;color:#1f2328;font-style:normal;letter-spacing:0.2px;">A3.1.7</div>
<div class="t" style="left:970.9px;top:699.15px;font-size:14px;font-weight:700;color:#a22ec8;font-style:normal;letter-spacing:0.1px;">ACTIVITY</div>
<div class="t" style="left:1091.5px;top:699.15px;font-size:14px;font-weight:400;color:#1f2328;font-style:normal;letter-spacing:0.18px;">New</div>
<div class="t" style="left:1188.7px;top:699.15px;font-size:14px;font-weight:400;color:#1f2328;font-style:normal;letter-spacing:0.2px;">Normal</div>
<div class="a" style="left:1297px;top:691px;width:28px;height:28px;border-radius:50%;background:#c03ec4"></div>
<div class="t" style="left:1297px;top:698.80px;font-size:13px;font-weight:400;color:#fff;font-style:normal;letter-spacing:-0.4px;-webkit-text-stroke:0.35px #fff;width:28px;text-align:center;text-indent:-0.4px">CP</div>
<div class="t" style="left:1329.6px;top:697.15px;font-size:14px;font-weight:400;color:#1f2328;font-style:normal;letter-spacing:0.08px;">Claudia Prieto</div>
<div class="t" style="left:1526.5px;top:699.15px;font-size:14px;font-weight:400;color:#1f2328;font-style:normal;letter-spacing:0.6px;">08/0<span style="letter-spacing:-0.4px">1</span>/2024</div>
<div class="t" style="left:1654.5px;top:699.15px;font-size:14px;font-weight:400;color:#1f2328;font-style:normal;letter-spacing:0.6px;">09/0<span style="letter-spacing:-0.4px">1</span>/2025</div>
<div class="a" style="left:247px;top:724px;width:1585px;height:1px;background:#e4e6e8"></div>
<div class="t" style="left:269.5px;top:739.15px;font-size:14px;font-weight:400;color:#1b62a0;font-style:normal;letter-spacing:0.2px;">2<span style="letter-spacing:-0.6px">1</span><span style="letter-spacing:-0.6px">1</span></div>
<div class="t" style="left:430.5px;top:739.15px;font-size:14px;font-weight:400;color:#1f2328;font-style:normal;letter-spacing:0.2px;">A3.1.8</div>
<div class="t" style="left:970.9px;top:739.15px;font-size:14px;font-weight:700;color:#a22ec8;font-style:normal;letter-spacing:0.1px;">ACTIVITY</div>
<div class="t" style="left:1091.5px;top:739.15px;font-size:14px;font-weight:400;color:#1f2328;font-style:normal;letter-spacing:0.18px;">New</div>
<div class="t" style="left:1188.7px;top:739.15px;font-size:14px;font-weight:400;color:#1f2328;font-style:normal;letter-spacing:0.2px;">Normal</div>
<div class="a" style="left:1297px;top:731px;width:28px;height:28px;border-radius:50%;background:#4fbfae"></div>
<div class="t" style="left:1297px;top:738.80px;font-size:13px;font-weight:400;color:#fff;font-style:normal;letter-spacing:-0.4px;-webkit-text-stroke:0.35px #fff;width:28px;text-align:center;text-indent:-0.4px">CK</div>
<div class="t" style="left:1329.6px;top:737.15px;font-size:14px;font-weight:400;color:#1f2328;font-style:normal;letter-spacing:0.28px;">Christoph Kolbitsch</div>
<div class="t" style="left:1526.5px;top:739.15px;font-size:14px;font-weight:400;color:#1f2328;font-style:normal;letter-spacing:0.6px;">09/03/2024</div>
<div class="t" style="left:1654.5px;top:739.15px;font-size:14px;font-weight:400;color:#1f2328;font-style:normal;letter-spacing:0.6px;">04/0<span style="letter-spacing:-0.4px">1</span>/2025</div>
<div class="a" style="left:247px;top:764px;width:1585px;height:1px;background:#e4e6e8"></div>
<div class="t" style="left:269.5px;top:779.15px;font-size:14px;font-weight:400;color:#1b62a0;font-style:normal;letter-spacing:0.2px;">2<span style="letter-spacing:-0.6px">1</span>2</div>
<div class="t" style="left:430.5px;top:779.15px;font-size:14px;font-weight:400;color:#1f2328;font-style:normal;letter-spacing:0.2px;">A3.1.9</div>
<div class="t" style="left:970.9px;top:779.15px;font-size:14px;font-weight:700;color:#a22ec8;font-style:normal;letter-spacing:0.1px;">ACTIVITY</div>
<div class="t" style="left:1091.5px;top:779.15px;font-size:14px;font-weight:400;color:#1f2328;font-style:normal;letter-spacing:0.18px;">New</div>
<div class="t" style="left:1188.7px;top:779.15px;font-size:14px;font-weight:400;color:#1f2328;font-style:normal;letter-spacing:0.2px;">Normal</div>
<div class="a" style="left:1297px;top:771px;width:28px;height:28px;border-radius:50%;background:#4fbfae"></div>
<div class="t" style="left:1297px;top:778.80px;font-size:13px;font-weight:400;color:#fff;font-style:normal;letter-spacing:-0.4px;-webkit-text-stroke:0.35px #fff;width:28px;text-align:center;text-indent:-0.4px">CK</div>
<div class="t" style="left:1329.6px;top:777.15px;font-size:14px;font-weight:400;color:#1f2328;font-style:normal;letter-spacing:0.28px;">Christoph Kolbitsch</div>
<div class="t" style="left:1526.5px;top:779.15px;font-size:14px;font-weight:400;color:#1f2328;font-style:normal;letter-spacing:0.6px;">04/0<span style="letter-spacing:-0.4px">1</span>/2025</div>
<div class="t" style="left:1654.5px;top:779.15px;font-size:14px;font-weight:400;color:#1f2328;font-style:normal;letter-spacing:0.6px;">09/0<span style="letter-spacing:-0.4px">1</span>/2025</div>
<div class="a" style="left:247px;top:804px;width:1585px;height:1px;background:#e4e6e8"></div>
<div class="t" style="left:269.5px;top:819.15px;font-size:14px;font-weight:400;color:#1b62a0;font-style:normal;letter-spacing:0.2px;">2<span style="letter-spacing:-0.6px">1</span>3</div>
<svg class="a" style="left:388.6px;top:821.3px" width="12" height="8"><path d="M1.2 1.2 L5.5 5.5 L9.8 1.2" fill="none" stroke="#1f2328" stroke-width="1.8"/></svg>
<div class="t" style="left:410.7px;top:819.15px;font-size:14px;font-weight:400;color:#1f2328;font-style:normal;letter-spacing:0.22px;">Task 3.2 In-vivo applications and clinical evaluation</div>
<div class="t" style="left:970.9px;top:819.15px;font-size:14px;font-weight:700;color:#6a30e0;font-style:normal;letter-spacing:-0.45px;">TASK</div>
<div class="t" style="left:1091.5px;top:819.15px;font-size:14px;font-weight:400;color:#1f2328;font-style:normal;letter-spacing:0.18px;">New</div>
<div class="t" style="left:1188.7px;top:819.15px;font-size:14px;font-weight:400;color:#1f2328;font-style:normal;letter-spacing:0.2px;">Normal</div>
<div class="a" style="left:1297px;top:811px;width:28px;height:28px;border-radius:50%;background:#c03ec4"></div>
<div class="t" style="left:1297px;top:818.80px;font-size:13px;font-weight:400;color:#fff;font-style:normal;letter-spacing:-0.4px;-webkit-text-stroke:0.35px #fff;width:28px;text-align:center;text-indent:-0.4px">CP</div>
<div class="t" style="left:1329.6px;top:817.15px;font-size:14px;font-weight:400;color:#1f2328;font-style:normal;letter-spacing:0.08px;">Claudia Prieto</div>
<div class="t" style="left:1526.5px;top:819.15px;font-size:14px;font-weight:400;color:#1f2328;font-style:normal;letter-spacing:0.6px;">03/0<span style="letter-spacing:-0.4px">1</span>/2024</div>
<div class="t" style="left:1654.5px;top:819.15px;font-size:14px;font-weight:400;color:#1f2328;font-style:normal;letter-spacing:0.6px;">09/0<span style="letter-spacing:-0.4px">1</span>/2026</div>
<div class="a" style="left:247px;top:844px;width:1585px;height:1px;background:#e4e6e8"></div>
<div class="t" style="left:269.5px;top:859.15px;font-size:14px;font-weight:400;color:#1b62a0;font-style:normal;letter-spacing:0.2px;">2<span style="letter-spacing:-0.6px">1</span>4</div>
<div class="t" style="left:430.5px;top:859.15px;font-size:14px;font-weight:400;color:#1f2328;font-style:normal;letter-spacing:0.2px;">A3.2.1</div>
<div class="t" style="left:970.9px;top:859.15px;font-size:14px;font-weight:700;color:#a22ec8;font-style:normal;letter-spacing:0.1px;">ACTIVITY</div>
<div class="t" style="left:1091.5px;top:859.15px;font-size:14px;font-weight:400;color:#1f2328;font-style:normal;letter-spacing:0.18px;">New</div>
<div class="t" style="left:1188.7px;top:859.15px;font-size:14px;font-weight:400;color:#1f2328;font-style:normal;letter-spacing:0.2px;">Normal</div>
<div class="a" style="left:1297px;top:851px;width:28px;height:28px;border-radius:50%;background:#c03ec4"></div>
<div class="t" style="left:1297px;top:858.80px;font-size:13px;font-weight:400;color:#fff;font-style:normal;letter-spacing:-0.4px;-webkit-text-stroke:0.35px #fff;width:28px;text-align:center;text-indent:-0.4px">CP</div>
<div class="t" style="left:1329.6px;top:857.15px;font-size:14px;font-weight:400;color:#1f2328;font-style:normal;letter-spacing:0.08px;">Claudia Prieto</div>
<div class="t" style="left:1526.5px;top:859.15px;font-size:14px;font-weight:400;color:#1f2328;font-style:normal;letter-spacing:0.6px;">03/0<span style="letter-spacing:-0.4px">1</span>/2024</div>
<div class="t" style="left:1654.5px;top:859.15px;font-size:14px;font-weight:400;color:#1f2328;font-style:normal;letter-spacing:0.6px;">06/03/2024</div>
<div class="a" style="left:247px;top:884px;width:1585px;height:1px;background:#e4e6e8"></div>
<div class="t" style="left:269.5px;top:899.15px;font-size:14px;font-weight:400;color:#1b62a0;font-style:normal;letter-spacing:0.2px;">2<span style="letter-spacing:-0.6px">1</span>5</div>
<div class="t" style="left:430.5px;top:899.15px;font-size:14px;font-weight:400;color:#1f2328;font-style:normal;letter-spacing:0.2px;">A3.2.2</div>
<div class="t" style="left:970.9px;top:899.15px;font-size:14px;font-weight:700;color:#a22ec8;font-style:normal;letter-spacing:0.1px;">ACTIVITY</div>
<div class="t" style="left:1091.5px;top:899.15px;font-size:14px;font-weight:400;color:#1f2328;font-style:normal;letter-spacing:0.18px;">New</div>
<div class="t" style="left:1188.7px;top:899.15px;font-size:14px;font-weight:400;color:#1f2328;font-style:normal;letter-spacing:0.2px;">Normal</div>
<div class="a" style="left:1297px;top:891px;width:28px;height:28px;border-radius:50%;background:#c03ec4"></div>
<div class="t" style="left:1297px;top:898.80px;font-size:13px;font-weight:400;color:#fff;font-style:normal;letter-spacing:-0.4px;-webkit-text-stroke:0.35px #fff;width:28px;text-align:center;text-indent:-0.4px">CP</div>
<div class="t" style="left:1329.6px;top:897.15px;font-size:14px;font-weight:400;color:#1f2328;font-style:normal;letter-spacing:0.08px;">Claudia Prieto</div>
<div class="t" style="left:1526.5px;top:899.15px;font-size:14px;font-weight:400;color:#1f2328;font-style:normal;letter-spacing:0.6px;">06/03/2024</div>
<div class="t" style="left:1654.5px;top:899.15px;font-size:14px;font-weight:400;color:#1f2328;font-style:normal;letter-spacing:0.6px;">09/03/2024</div>
<div class="a" style="left:247px;top:924px;width:1585px;height:1px;background:#e4e6e8"></div>
<div class="t" style="left:269.5px;top:939.15px;font-size:14px;font-weight:400;color:#1b62a0;font-style:normal;letter-spacing:0.2px;">2<span style="letter-spacing:-0.6px">1</span>6</div>
<div class="t" style="left:430.5px;top:939.15px;font-size:14px;font-weight:400;color:#1f2328;font-style:normal;letter-spacing:0.2px;">A3.2.3</div>
<div class="t" style="left:970.9px;top:939.15px;font-size:14px;font-weight:700;color:#a22ec8;font-style:normal;letter-spacing:0.1px;">ACTIVITY</div>
<div class="t" style="left:1091.5px;top:939.15px;font-size:14px;font-weight:400;color:#1f2328;font-style:normal;letter-spacing:0.18px;">New</div>
<div class="t" style="left:1188.7px;top:939.15px;font-size:14px;font-weight:400;color:#1f2328;font-style:normal;letter-spacing:0.2px;">Normal</div>
<div class="a" style="left:1297px;top:931px;width:28px;height:28px;border-radius:50%;background:#c03ec4"></div>
<div class="t" style="left:1297px;top:938.80px;font-size:13px;font-weight:400;color:#fff;font-style:normal;letter-spacing:-0.4px;-webkit-text-stroke:0.35px #fff;width:28px;text-align:center;text-indent:-0.4px">CP</div>
<div class="t" style="left:1329.6px;top:937.15px;font-size:14px;font-weight:400;color:#1f2328;font-style:normal;letter-spacing:0.08px;">Claudia Prieto</div>
<div class="t" style="left:1526.5px;top:939.15px;font-size:14px;font-weight:400;color:#1f2328;font-style:normal;letter-spacing:0.6px;">08/0<span style="letter-spacing:-0.4px">1</span>/2024</div>
<div class="t" style="left:1654.5px;top:939.15px;font-size:14px;font-weight:400;color:#1f2328;font-style:normal;letter-spacing:0.6px;">09/0<span style="letter-spacing:-0.4px">1</span>/2025</div>
<div class="a" style="left:227px;top:983px;width:1613px;height:22px;background:linear-gradient(to bottom, rgba(0,0,0,0), rgba(0,0,0,0.062));-webkit-mask-image:linear-gradient(to right, #000 0%, #000 80%, transparent 93%)"></div>
<div class="a" style="left:247px;top:969px;width:25px;height:27px;border:1px solid #cfd6dd;border-radius:2px;background:linear-gradient(#fafafa,#f0f0f0)"></div>
<div class="t" style="left:255.5px;top:975.15px;font-size:14px;font-weight:400;color:#1f2328;font-style:normal;letter-spacing:0px;">&lt;</div>
<div class="a" style="left:277px;top:969px;width:25px;height:27px;border:1px solid #cfd6dd;border-radius:2px;background:linear-gradient(#fafafa,#f0f0f0)"></div>
<div class="t" style="left:285.5px;top:975.15px;font-size:14px;font-weight:400;color:#1f2328;font-style:normal;letter-spacing:0px;">1</div>
<div class="a" style="left:307px;top:969px;width:25px;height:27px;border:1px solid #cfd6dd;border-radius:2px;background:linear-gradient(#fafafa,#f0f0f0)"></div>
<div class="t" style="left:315.5px;top:975.15px;font-size:14px;font-weight:400;color:#1f2328;font-style:normal;letter-spacing:0px;">2</div>
<div class="t" style="left:346px;top:975.15px;font-size:14px;font-weight:400;color:#1f2328;font-style:italic;letter-spacing:0px;">3</div>
<div class="a" style="left:367px;top:969px;width:25px;height:27px;border:1px solid #cfd6dd;border-radius:2px;background:linear-gradient(#fafafa,#f0f0f0)"></div>
<div class="t" style="left:375.5px;top:975.15px;font-size:14px;font-weight:400;color:#1f2328;font-style:normal;letter-spacing:0px;">4</div>
<div class="a" style="left:397px;top:969px;width:25px;height:27px;border:1px solid #cfd6dd;border-radius:2px;background:linear-gradient(#fafafa,#f0f0f0)"></div>
<div class="t" style="left:405.5px;top:975.15px;font-size:14px;font-weight:400;color:#1f2328;font-style:normal;letter-spacing:0px;">5</div>
<div class="a" style="left:427px;top:969px;width:25px;height:27px;border:1px solid #cfd6dd;border-radius:2px;background:linear-gradient(#fafafa,#f0f0f0)"></div>
<div class="t" style="left:435.5px;top:975.15px;font-size:14px;font-weight:400;color:#1f2328;font-style:normal;letter-spacing:0px;">6</div>
<div class="t" style="left:457.5px;top:975.15px;font-size:14px;font-weight:400;color:#1f2328;font-style:normal;letter-spacing:0px;">...</div>
<div class="a" style="left:474px;top:969px;width:25px;height:27px;border:1px solid #cfd6dd;border-radius:2px;background:linear-gradient(#fafafa,#f0f0f0)"></div>
<div class="t" style="left:482.5px;top:975.15px;font-size:14px;font-weight:400;color:#1f2328;font-style:normal;letter-spacing:0px;">8</div>
<div class="a" style="left:504px;top:969px;width:25px;height:27px;border:1px solid #cfd6dd;border-radius:2px;background:linear-gradient(#fafafa,#f0f0f0)"></div>
<div class="t" style="left:512.5px;top:975.15px;font-size:14px;font-weight:400;color:#1f2328;font-style:normal;letter-spacing:0px;">&gt;</div>
<div class="t" style="left:540.2px;top:975.15px;font-size:14px;font-weight:400;color:#1f2328;font-style:normal;letter-spacing:-0.1px;">(41 - 60/143)</div>
<div class="t" style="left:1710px;top:975.15px;font-size:14px;font-weight:400;color:#1f2328;font-style:normal;letter-spacing:-0.3px;">Per page:</div>
<div class="t" style="left:1777px;top:975.15px;font-size:14px;font-weight:400;color:#1f2328;font-style:italic;letter-spacing:0px;">20</div>
<div class="a" style="left:1803.5px;top:969px;width:29px;height:27px;border:1px solid #cfd6dd;border-radius:2px;background:#f6f7f8"></div>
<div class="t" style="left:1806px;top:975.15px;font-size:14px;font-weight:400;color:#1f2328;font-style:normal;letter-spacing:0px;">100</div></body></html>
